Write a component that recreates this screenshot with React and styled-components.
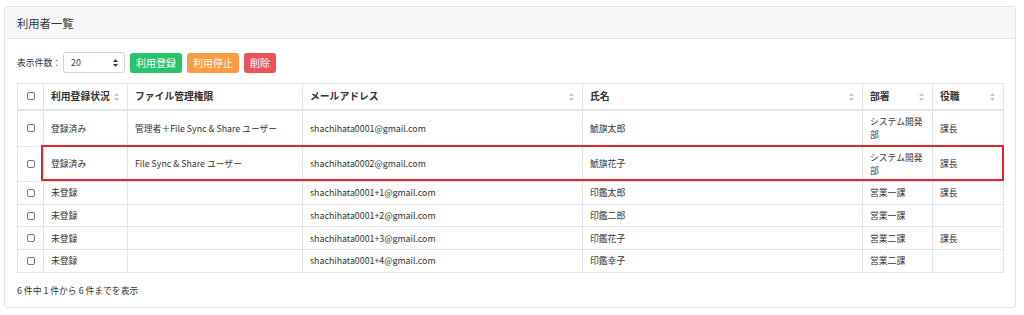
import React from "react";
import styled, { createGlobalStyle } from "styled-components";

const GlobalStyle = createGlobalStyle`
  html, body { margin: 0; padding: 0; background: #fff; }
  body { font-family: "Noto Sans CJK JP", "Noto Sans", sans-serif; color: #333; }
  * { box-sizing: border-box; }
`;

const Page = styled.div`
  padding: 6px 8px 0 4px;
`;

const Card = styled.section`
  border: 1px solid #e3e3e3;
  border-radius: 3px;
  background: #fff;
  height: 302px;
  display: flex;
  flex-direction: column;
`;

const CardHeader = styled.header`
  height: 32px;
  background: #f7f7f7;
  border-bottom: 1px solid #e3e3e3;
  display: flex;
  align-items: center;
  padding: 0 12px;
  font-size: 11.3px;
  color: #333;
`;

const CardBody = styled.div`
  padding: 13px 12px 0 12px;
  display: flex;
  flex-direction: column;
`;

const Toolbar = styled.div`
  display: flex;
  align-items: center;
  height: 21px;
  gap: 5px;
  margin-bottom: 10px;
`;

const Label = styled.span`
  font-size: 8.8px;
  color: #333;
  margin-right: -3px;
`;

const Select = styled.div`
  position: relative;
  width: 62px;
  height: 21px;
  border: 1px solid #ced4da;
  border-radius: 3px;
  display: flex;
  align-items: center;
  padding-left: 7px;
  font-size: 8.8px;
  color: #444;
`;

const SelectArrow = styled.span`
  position: absolute;
  right: 6px;
  top: 50%;
  transform: translateY(-50%);
  display: flex;
`;

const Button = styled.button`
  height: 20px;
  padding: 0 6px;
  border: none;
  border-radius: 3px;
  background: ${(p) => p.$bg};
  color: #fff;
  font-family: inherit;
  font-size: 10px;
  line-height: 20px;
  cursor: pointer;
`;

const TableWrap = styled.div`
  position: relative;
`;

const Table = styled.table`
  width: 986px;
  border-collapse: collapse;
  table-layout: fixed;
  font-size: 8.8px;
  color: #333;
`;

const Th = styled.th`
  position: relative;
  text-align: ${(p) => (p.$center ? "center" : "left")};
  font-weight: bold;
  font-size: 9.8px;
  line-height: 13px;
  padding: ${(p) => (p.$center ? "6px 0" : "6px 7px")};
  border: 1px solid #e2e5e8;
  border-bottom: 2px solid #e2e5e8;
  vertical-align: middle;
  white-space: nowrap;
  overflow: hidden;
`;

const Td = styled.td`
  padding: ${(p) => (p.$center ? "4.3px 0" : "4.3px 6px 4.3px 7px")};
  text-align: ${(p) => (p.$center ? "center" : "left")};
  line-height: 13px;
  border: 1px solid #e2e5e8;
  vertical-align: middle;
`;

const Check = styled.span`
  display: inline-block;
  width: 8px;
  height: 8px;
  border: 1px solid #777;
  border-radius: 2px;
  background: #fff;
  vertical-align: middle;
  margin-top: -2px;
`;

const SortIcon = styled.span`
  position: absolute;
  right: 8px;
  top: 50%;
  transform: translateY(-50%);
  display: flex;
`;

const Highlight = styled.div`
  position: absolute;
  left: 24px;
  top: 62px;
  width: 963px;
  height: 36px;
  border: 2px solid #e3262b;
  pointer-events: none;
`;

const Footer = styled.div`
  margin-top: 11px;
  font-size: 8.8px;
  color: #333;
`;

const Arrows = ({ color = "#c6c6c6" }) => (
  <svg width="5" height="9" viewBox="0 0 5 9">
    <path d="M0 3.6 L2.5 0.6 L5 3.6 Z" fill={color} />
    <path d="M0 5.4 L2.5 8.4 L5 5.4 Z" fill={color} />
  </svg>
);

const columns = [
  { key: "check", width: 26, center: true },
  { key: "status", label: "利用登録状況", width: 84, sort: true },
  { key: "perm", label: "ファイル管理権限", width: 175 },
  { key: "email", label: "メールアドレス", width: 280, sort: true },
  { key: "name", label: "氏名", width: 280, sort: true },
  { key: "dept", label: "部署", width: 70, sort: true },
  { key: "role", label: "役職", width: 71, sort: true },
];

const rows = [
  { status: "登録済み", perm: "管理者＋File Sync & Share ユーザー", email: "shachihata0001@gmail.com", name: "鯱旗太郎", dept: "システム開発部", role: "課長" },
  { status: "登録済み", perm: "File Sync & Share ユーザー", email: "shachihata0002@gmail.com", name: "鯱旗花子", dept: "システム開発部", role: "課長" },
  { status: "未登録", perm: "", email: "shachihata0001+1@gmail.com", name: "印鑑太郎", dept: "営業一課", role: "課長" },
  { status: "未登録", perm: "", email: "shachihata0001+2@gmail.com", name: "印鑑二郎", dept: "営業一課", role: "" },
  { status: "未登録", perm: "", email: "shachihata0001+3@gmail.com", name: "印鑑花子", dept: "営業二課", role: "課長" },
  { status: "未登録", perm: "", email: "shachihata0001+4@gmail.com", name: "印鑑幸子", dept: "営業二課", role: "" },
];

export default function App() {
  return (
    <>
      <GlobalStyle />
      <Page>
        <Card>
          <CardHeader>利用者一覧</CardHeader>
          <CardBody>
            <Toolbar>
              <Label>表示件数：</Label>
              <Select>
                20
                <SelectArrow>
                  <Arrows color="#333" />
                </SelectArrow>
              </Select>
              <Button $bg="#2bc26b">利用登録</Button>
              <Button $bg="#fb9b42">利用停止</Button>
              <Button $bg="#e9535a">削除</Button>
            </Toolbar>
            <TableWrap>
              <Table>
                <colgroup>
                  {columns.map((c) => (
                    <col key={c.key} style={{ width: c.width }} />
                  ))}
                </colgroup>
                <thead>
                  <tr>
                    {columns.map((c) => (
                      <Th key={c.key} $center={c.center}>
                        {c.key === "check" ? <Check /> : c.label}
                        {c.sort && (
                          <SortIcon>
                            <Arrows />
                          </SortIcon>
                        )}
                      </Th>
                    ))}
                  </tr>
                </thead>
                <tbody>
                  {rows.map((r, i) => (
                    <tr key={i}>
                      <Td $center>
                        <Check />
                      </Td>
                      <Td>{r.status}</Td>
                      <Td>{r.perm}</Td>
                      <Td>{r.email}</Td>
                      <Td>{r.name}</Td>
                      <Td>{r.dept}</Td>
                      <Td>{r.role}</Td>
                    </tr>
                  ))}
                </tbody>
              </Table>
              <Highlight />
            </TableWrap>
            <Footer>6 件中 1 件から 6 件までを表示</Footer>
          </CardBody>
        </Card>
      </Page>
    </>
  );
}
